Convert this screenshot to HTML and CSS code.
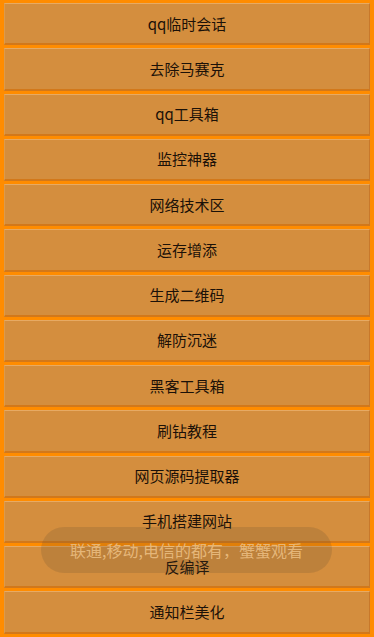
FILE: index.html
```html
<!DOCTYPE html>
<html lang="zh">
<head>
<meta charset="utf-8">
<link rel="stylesheet" href="styles.css">
</head>
<body>
<div class="list">
  <div class="btn">qq临时会话</div>
  <div class="btn">去除马赛克</div>
  <div class="btn">qq工具箱</div>
  <div class="btn">监控神器</div>
  <div class="btn">网络技术区</div>
  <div class="btn">运存增添</div>
  <div class="btn">生成二维码</div>
  <div class="btn">解防沉迷</div>
  <div class="btn">黑客工具箱</div>
  <div class="btn">刷钻教程</div>
  <div class="btn">网页源码提取器</div>
  <div class="btn">手机搭建网站</div>
  <div class="btn">反编译</div>
  <div class="btn">通知栏美化</div>
</div>
<div class="toast">联通,移动,电信的都有，蟹蟹观看</div>
</body>
</html>
```
FILE: styles.css
```css
html, body {
  margin: 0;
  padding: 0;
  background: #ff8c00;
  height: 100%;
  overflow: hidden;
}
body {
  font-family: "Noto Sans CJK SC", "Noto Sans", sans-serif;
}
.list {
  display: flex;
  flex-direction: column;
  gap: 3px;
  padding: 3px 4px 0 4px;
}
.btn {
  height: 42.25px;
  box-sizing: border-box;
  background: #d48e3e;
  border-top: 1px solid #e7aa63;
  border-bottom: 2px solid #d2781a;
  border-left: 1px solid #dc9a4c;
  border-right: 1px solid #c8782a;
  display: flex;
  align-items: center;
  justify-content: center;
  font-size: 15px;
  color: #1b1108;
  padding-bottom: 1px;
}
.toast {
  position: absolute;
  left: 41px;
  top: 527px;
  width: 291px;
  height: 46px;
  border-radius: 23px;
  background: rgba(90, 70, 50, 0.18);
  color: rgba(235, 190, 130, 0.9);
  font-size: 16px;
  display: flex;
  align-items: center;
  justify-content: center;
}
```
